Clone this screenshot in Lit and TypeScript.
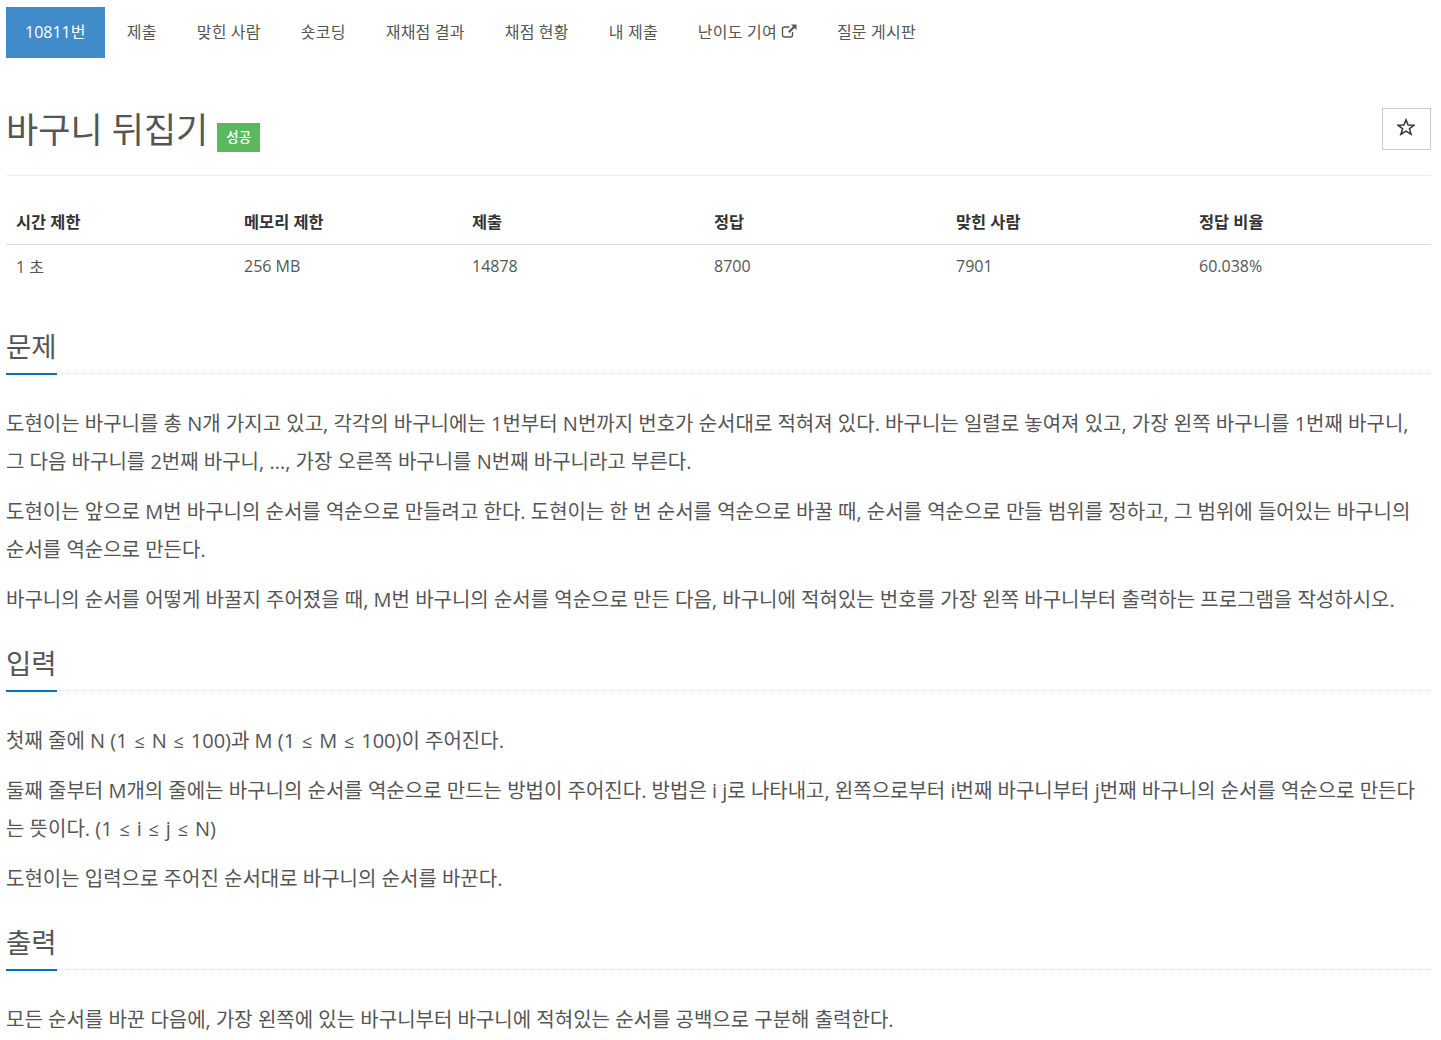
import { LitElement, html, css, svg } from 'lit'
import { customElement } from 'lit/decorators.js'

const tabs = ['제출', '맞힌 사람', '숏코딩', '재채점 결과', '채점 현황', '내 제출']

const externalIcon = svg`<svg class="ext" viewBox="0 0 16 14" width="16" height="14" aria-hidden="true">
  <path d="M11.5 8v3a2 2 0 0 1-2 2h-6a2 2 0 0 1-2-2V5a2 2 0 0 1 2-2h5" fill="none" stroke="currentColor" stroke-width="1.4"/>
  <path d="M10 .5h5.5V6l-2-2-5 5-1.5-1.5 5-5z" fill="currentColor"/>
</svg>`

const starIcon = svg`<svg viewBox="0 0 18 18" width="18" height="18" aria-hidden="true">
  <path d="M9 1.8l2.1 5.2 5.9.2-4.6 3.5 1.7 5.6L9 13.2l-5.1 3.1 1.7-5.6L1 7.2l5.9-.2z" fill="none" stroke="#333" stroke-width="1.5"/>
</svg>`

const sections = [
  {
    title: '문제',
    paragraphs: [
      '도현이는 바구니를 총 N개 가지고 있고, 각각의 바구니에는 1번부터 N번까지 번호가 순서대로 적혀져 있다. 바구니는 일렬로 놓여져 있고, 가장 왼쪽 바구니를 1번째 바구니, 그 다음 바구니를 2번째 바구니, ..., 가장 오른쪽 바구니를 N번째 바구니라고 부른다.',
      '도현이는 앞으로 M번 바구니의 순서를 역순으로 만들려고 한다. 도현이는 한 번 순서를 역순으로 바꿀 때, 순서를 역순으로 만들 범위를 정하고, 그 범위에 들어있는 바구니의 순서를 역순으로 만든다.',
      '바구니의 순서를 어떻게 바꿀지 주어졌을 때, M번 바구니의 순서를 역순으로 만든 다음, 바구니에 적혀있는 번호를 가장 왼쪽 바구니부터 출력하는 프로그램을 작성하시오.',
    ],
  },
  {
    title: '입력',
    paragraphs: [
      '첫째 줄에 N (1 ≤ N ≤ 100)과 M (1 ≤ M ≤ 100)이 주어진다.',
      '둘째 줄부터 M개의 줄에는 바구니의 순서를 역순으로 만드는 방법이 주어진다. 방법은 i j로 나타내고, 왼쪽으로부터 i번째 바구니부터 j번째 바구니의 순서를 역순으로 만든다는 뜻이다. (1 ≤ i ≤ j ≤ N)',
      '도현이는 입력으로 주어진 순서대로 바구니의 순서를 바꾼다.',
    ],
  },
  {
    title: '출력',
    paragraphs: ['모든 순서를 바꾼 다음에, 가장 왼쪽에 있는 바구니부터 바구니에 적혀있는 순서를 공백으로 구분해 출력한다.'],
  },
]

const stats = [
  ['시간 제한', '1 초'],
  ['메모리 제한', '256 MB'],
  ['제출', '14878'],
  ['정답', '8700'],
  ['맞힌 사람', '7901'],
  ['정답 비율', '60.038%'],
]

const ko = (text: string) =>
  text.split(/([\uAC00-\uD7A3]+)/).map((part, i) =>
    i % 2 ? html`<span class="ko">${part}</span>` : part)

// the ≤ signs sit smaller with more air around them
const prose = (text: string) =>
  text.split('≤').map((part, i) =>
    i ? html`<span class="le">≤</span>${part}` : part)

@customElement('app-root')
export class AppRoot extends LitElement {
  static styles = css`
    :host {
      display: block;
      padding: 7px 10px 0 6px;
      font-family: 'Open Sans', 'Noto Sans CJK KR', sans-serif;
      font-size: 16px;
      color: #555;
      height: 1040px;
      overflow: hidden;
      box-sizing: border-box;
    }
    .ko { font-size: var(--ko-size, 1em); letter-spacing: var(--ko-space, 0); }
    .tabs { display: flex; height: 51px; --ko-size: 16px; --ko-space: 0.25px; }
    .tab {
      display: flex;
      align-items: center;
      padding: 0 20px 3px;
      gap: 4px;
      white-space: nowrap;
    }
    .tab.active { background: #428bca; color: #fff; padding: 0 19px 3px; margin-right: 2px; }
    .ext { color: #555; }
    .title-row {
      display: flex;
      justify-content: space-between;
      align-items: flex-start;
      margin-top: 50px;
      height: 67px;
      border-bottom: 1px solid #eee;
    }
    h1 {
      margin: 0;
      font-size: 35px;
      font-weight: 400;
      line-height: 44px;
      display: flex;
      align-items: flex-end;
      gap: 9px;
    }
    .label {
      background: #5cb85c;
      color: #fff;
      font-size: 13.5px;
      line-height: 29px;
      padding: 0 9px;
      font-weight: 500;
    }
    .star {
      width: 49px;
      height: 42px;
      box-sizing: border-box;
      border: 1px solid #ccc;
      padding: 0 2px 4px 0;
      display: flex;
      align-items: center;
      justify-content: center;
    }
    table {
      width: 100%;
      border-collapse: collapse;
      table-layout: fixed;
      margin: 25px 0 41px;
    }
    th, td { text-align: left; font-size: 16px; }
    th {
      color: #333;
      font-weight: 700;
      padding: 0 10px 4px;
      height: 39px;
      border-bottom: 1px solid #ddd;
      --ko-size: 16.4px;
    }
    td { padding: 0 10px 2px; height: 41px; --ko-size: 16px; }
    .section { display: block; margin-top: 27px; }
    h2 {
      margin: 0;
      font-size: 27.5px;
      font-weight: 400;
      line-height: 36px;
      height: 44px;
      border-bottom: 1px dotted #ddd;
    }
    h2 span {
      display: block;
      width: 51px;
      height: 100%;
      border-bottom: 2px solid #0076c0;
    }
    p { margin: 0 0 11.2px; font-size: 20px; line-height: 38.4px; }
    .le { font-size: 18px; margin: 0 1.7px; }
    .content { padding-top: 31px; }
  `

  render () {
    return html`
      <nav class="tabs">
        <div class="tab active"><div>${ko('10811번')}</div></div>
        ${tabs.map(t => html`<div class="tab"><div>${ko(t)}</div></div>`)}
        <div class="tab"><div>${ko('난이도 기여')}</div> ${externalIcon}</div>
        <div class="tab"><div>${ko('질문 게시판')}</div></div>
      </nav>
      <div class="title-row">
        <h1>바구니 뒤집기 <span class="label">성공</span></h1>
        <div class="star">${starIcon}</div>
      </div>
      <table>
        <colgroup>
          <col style="width:228px"><col style="width:228px"><col style="width:242px">
          <col style="width:242px"><col style="width:243px"><col>
        </colgroup>
        <thead><tr>${stats.map(s => html`<th>${ko(s[0])}</th>`)}</tr></thead>
        <tbody><tr>${stats.map(s => html`<td>${ko(s[1])}</td>`)}</tr></tbody>
      </table>
      ${sections.map(s => html`
        <section class="section">
          <h2><span>${s.title}</span></h2>
          <div class="content">${s.paragraphs.map(p => html`<p>${prose(p)}</p>`)}</div>
        </section>
      `)}
    `
  }
}
